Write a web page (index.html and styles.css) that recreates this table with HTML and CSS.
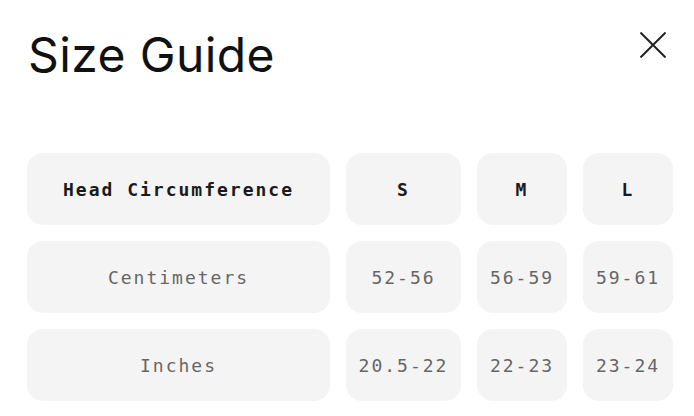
FILE: index.html
```html
<!DOCTYPE html>
<html lang="en">
<head>
<meta charset="utf-8">
<link rel="stylesheet" href="styles.css">
</head>
<body>
<div class="modal">
  <header class="head">
    <h1 class="title">Size Guide</h1>
    <button class="close" aria-label="Close">
      <svg width="26" height="26" viewBox="0 0 26 26"><path d="M0.5 0.5 L25.5 25.5 M25.5 0.5 L0.5 25.5" stroke="#222" stroke-width="2" fill="none"/></svg>
    </button>
  </header>
  <div class="grid">
    <div class="cell th">Head Circumference</div>
    <div class="cell th">S</div>
    <div class="cell th">M</div>
    <div class="cell th">L</div>
    <div class="cell">Centimeters</div>
    <div class="cell">52-56</div>
    <div class="cell">56-59</div>
    <div class="cell">59-61</div>
    <div class="cell">Inches</div>
    <div class="cell">20.5-22</div>
    <div class="cell">22-23</div>
    <div class="cell">23-24</div>
  </div>
</div>
</body>
</html>
```
FILE: styles.css
```css
html, body { margin: 0; padding: 0; background: #fff; }
.modal { padding: 0 21px 0 27px; }
.head { display: flex; justify-content: space-between; align-items: flex-start; height: 153px; }
.title {
  margin: 0; padding: 25px 0 0 1px;
  font-family: Inter, "Noto Sans", sans-serif;
  font-weight: 400; font-size: 48px; line-height: 60px;
  color: #111; letter-spacing: 0.4px;
}
.close { border: 0; background: none; padding: 0; margin: 32px 7px 0 0; width: 26px; height: 26px; cursor: pointer; }
.close svg { display: block; }
.grid {
  display: grid;
  grid-template-columns: 303px 115px 90px 90px;
  grid-auto-rows: 72px;
  gap: 16px;
}
.cell {
  background: #f4f4f4; border-radius: 16px;
  display: flex; align-items: center; justify-content: center;
  font-family: "DejaVu Sans Mono", "Liberation Mono", monospace;
  font-size: 18px; letter-spacing: 2px; color: #666;
}
.th { color: #1a1a1a; font-weight: 700; }
```
